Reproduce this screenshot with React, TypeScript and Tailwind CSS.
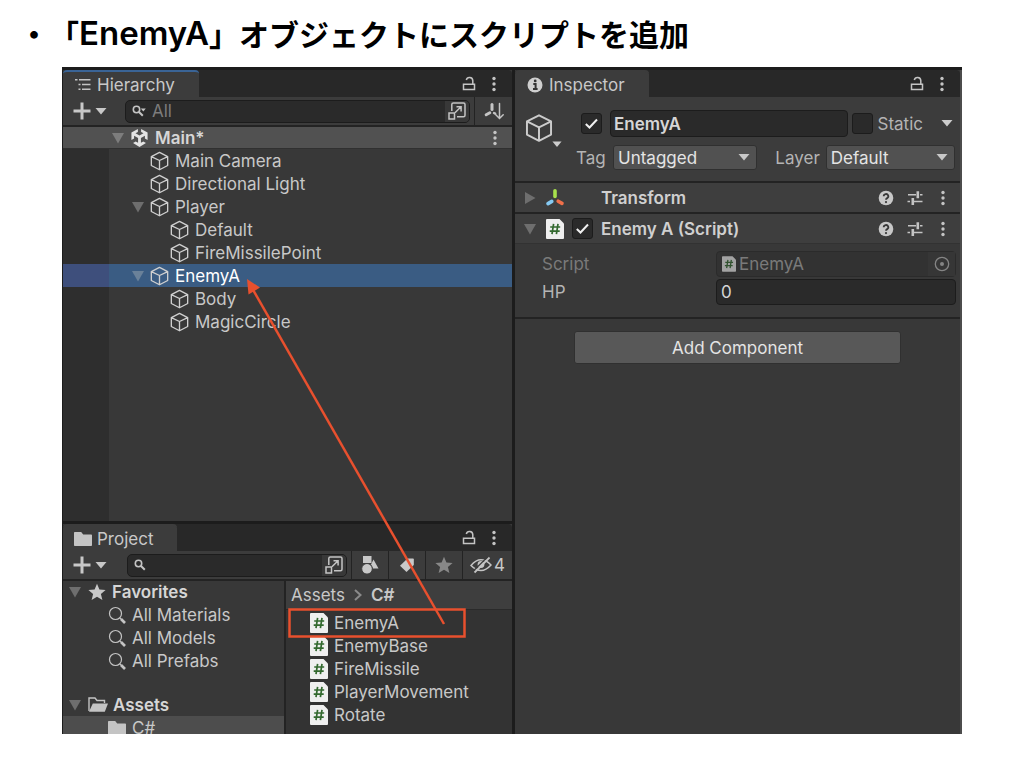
import React from 'react';

type IconProps = { className?: string };

const Triangle = ({ className = '' }: IconProps) => (
  <svg viewBox="0 0 12 12" className={`h-3 w-3 shrink-0 fill-current ${className}`} aria-hidden="true">
    <path d="M0 1h12L6 11.500z" />
  </svg>
);

const Caret = ({ className = '' }: IconProps) => (
  <svg viewBox="0 0 12 7" className={`h-[7px] w-3 shrink-0 fill-current ${className}`} aria-hidden="true">
    <path d="M.5 0h11L6 6.500z" />
  </svg>
);

const Cube = ({ className = '' }: IconProps) => (
  <svg viewBox="0 0 20 20" className={`shrink-0 fill-none stroke-current ${className}`} strokeWidth="1.4" strokeLinejoin="round" aria-hidden="true">
    <path d="M10 .9 18.600 5.300V14.700L10 19.200 1.400 14.700V5.300zM1.400 5.300 10 9.500l8.600-4.200M10 9.500v9.700" />
  </svg>
);

const UnityLogo = () => (
  <svg viewBox="0 0 20 20" className="h-5 w-[19px] shrink-0" aria-hidden="true">
    <path fill="#e4e4e4" d="M8.300.4v3.200L5.800 5l4.200 2.400L14.200 5l-2.500-1.400V.4l6.800 3.900v7.900l-2.800-1.600V7.700l-4.200 2.400v4.900l2.500-1.400 2.800 1.600L10 19.600l-6.800-4.400L6 13.600 8.500 15v-4.900L4.300 7.700v2.900l-2.800 1.600V4.300z" />
  </svg>
);

const Dots = () => (
  <svg viewBox="0 0 4 16" className="h-4 w-1 fill-[#c4c4c4]" aria-hidden="true">
    <circle cx="2" cy="2.500" r="1.700" />
    <circle cx="2" cy="8" r="1.700" />
    <circle cx="2" cy="13.500" r="1.700" />
  </svg>
);

const Lock = () => (
  <svg viewBox="0 0 14 16" className="h-4 w-[14px] fill-none stroke-[#c4c4c4]" strokeWidth="1.500" aria-hidden="true">
    <path d="M1.500 8.300h11v5.200h-11zM10.800 8V4.600a3.300 3.300 0 0 0-6.500-.6" />
  </svg>
);

const Plus = () => (
  <svg viewBox="0 0 18 18" className="h-[18px] w-[18px] stroke-[#c8c8c8]" strokeWidth="3" aria-hidden="true">
    <path d="M9 .5v17M.5 9h17" />
  </svg>
);

const SmallSearch = ({ caret = false }: { caret?: boolean }) => (
  <svg viewBox="0 0 14 12" className="h-3 w-[14px] shrink-0 fill-none stroke-[#c4c4c4]" strokeWidth="1.600" aria-hidden="true">
    <circle cx="4.500" cy="4.500" r="3.200" />
    <path d="m7 7 3.800 3.800" strokeWidth="2" />
    {caret && <path d="M8.800 3.600h5L11.300 6.400z" fill="#c4c4c4" stroke="none" />}
  </svg>
);

const Popout = () => (
  <svg viewBox="0 0 18 18" className="h-[18px] w-[18px] fill-none stroke-[#c4c4c4]" strokeWidth="1.500" aria-hidden="true">
    <path d="M3.800 9V2.500q0-1.500 1.500-1.500h10.200Q17 1 17 2.500v10.700q0 1.500-1.500 1.500H9M1 11h5.500v6H1zM7.200 10.500l5.600-5.500M8.500 4.800h4.600v4.600" />
  </svg>
);

const SortAxis = () => (
  <svg viewBox="0 0 20 18" className="h-[18px] w-5 fill-none stroke-[#c4c4c4]" strokeLinecap="round" aria-hidden="true">
    <path d="M8 2.500v5" strokeWidth="3" />
    <path d="m2.200 12.800 3.600-2" strokeWidth="3" />
    <path d="m10 11 1.200.6" strokeWidth="2.400" />
    <path d="M15.500 1.500V16M11.800 12.800l3.700 3.700 3.700-3.700" strokeWidth="1.500" />
  </svg>
);

const TransformIcon = () => (
  <svg viewBox="0 0 20 20" className="h-5 w-5 shrink-0 fill-none" strokeWidth="3.600" strokeLinecap="round" aria-hidden="true">
    <path d="M10 2.800v5.600" stroke="#a8e04c" />
    <path d="m3 15.600 3.800-2.200" stroke="#85c9f2" />
    <path d="m13.200 13.200 3.800 2.200" stroke="#f0704a" />
  </svg>
);

const ScriptIcon = ({ className = 'h-5 w-[18px]' }: IconProps) => (
  <svg viewBox="0 0 18 20" className={`shrink-0 ${className}`} aria-hidden="true">
    <path d="M1 0h12.500L18 4.500V19q0 1-1 1H1q-1 0-1-1V1q0-1 1-1z" fill="#efefef" />
    <path d="M7.600 4.800 6 15.200M12 4.800l-1.600 10.400M4.200 8h10M3.700 12.200h10" stroke="#33692f" strokeWidth="1.700" fill="none" />
  </svg>
);

const Help = () => (
  <svg viewBox="0 0 16 16" className="h-4 w-4" aria-hidden="true">
    <circle cx="8" cy="8" r="7.300" fill="#c8c8c8" />
    <path d="M5.700 6.300a2.300 2.200 0 1 1 3.500 1.800Q8 8.800 8 9.800" fill="none" stroke="#383838" strokeWidth="1.800" />
    <circle cx="8" cy="12.100" r="1.100" fill="#383838" />
  </svg>
);

const Presets = () => (
  <svg viewBox="0 0 16 16" className="h-4 w-4 fill-none stroke-[#c4c4c4]" strokeWidth="1.500" aria-hidden="true">
    <path d="M1 4.800h8M13 4.800h2.500M.5 11.500h2.500M7 11.500h8.500" />
    <path d="M10.800 1.300v7M5.800 8v7" strokeWidth="2.600" />
  </svg>
);

const InfoIcon = () => (
  <svg viewBox="0 0 16 16" className="h-4 w-4 shrink-0" aria-hidden="true">
    <circle cx="8" cy="8" r="7.500" fill="#cfcfcf" />
    <path d="M6.300 6.900H8.600v4.600M6 12h4.600" stroke="#333" strokeWidth="2" fill="none" />
    <circle cx="8.200" cy="3.900" r="1.400" fill="#333" />
  </svg>
);

const HierarchyIcon = () => (
  <svg viewBox="0 0 16 13" className="h-[13px] w-4 shrink-0 stroke-[#c4c4c4]" strokeWidth="1.600" aria-hidden="true">
    <path d="M0 1.800h2.500M4 1.800H15.500M3.500 6.500h2M7 6.500h8.500M3.500 11.200h2M7 11.200h8.500" />
  </svg>
);

const Folder = ({ className = '' }: IconProps) => (
  <svg viewBox="0 0 18 14" className={`h-[14px] w-[18px] shrink-0 fill-[#c4c4c4] ${className}`} aria-hidden="true">
    <path d="M.8 0h6.400l2 2.500h8q.8 0 .8.800v10q0 .7-.8.700H.8Q0 14 0 13.300V.8Q0 0 .8 0z" />
  </svg>
);

const FolderOpen = () => (
  <svg viewBox="0 0 20 15" className="h-[15px] w-5 shrink-0" aria-hidden="true">
    <path d="M1 14V1h6l2 2.500h7.500V6" fill="none" stroke="#c4c4c4" strokeWidth="1.400" />
    <path d="M4.800 6.500H20L16.800 14.800H1z" fill="#c4c4c4" />
  </svg>
);

const Star = ({ className = '' }: IconProps) => (
  <svg viewBox="0 0 18 18" className={`h-[18px] w-[18px] shrink-0 fill-current ${className}`} aria-hidden="true">
    <path d="m9 .8 2.400 5.700 6.200.5-4.700 4 1.500 6.100L9 13.800l-5.400 3.300L5.100 11 .4 7l6.200-.5z" />
  </svg>
);

const BigSearch = () => (
  <svg viewBox="0 0 18 18" className="h-[18px] w-[18px] shrink-0 fill-none stroke-[#c4c4c4]" aria-hidden="true">
    <circle cx="7.500" cy="7.500" r="6" strokeWidth="1.200" />
    <path d="m11.800 11.800 1.500 1.500" strokeWidth="1.200" />
    <path d="m13 13 4 4" strokeWidth="2.600" />
  </svg>
);

const Shapes = () => (
  <svg viewBox="0 0 18 20" className="h-5 w-[18px] fill-[#c8c8c8]" aria-hidden="true">
    <path d="M2 1h8.500v7H2zM12.500 4.500l5 9h-5.500l-2-4z" />
    <circle cx="6" cy="13.800" r="5.300" stroke="#3c3c3c" strokeWidth="1" />
  </svg>
);

const Tag = () => (
  <svg viewBox="0 0 16 16" className="h-4 w-4 fill-[#c8c8c8]" aria-hidden="true">
    <path d="M8.500 1.500H14q.8 0 .8.800V8L7.500 15 1 8.800z" />
  </svg>
);

const HiddenEye = () => (
  <svg viewBox="0 0 22 18" className="h-[18px] w-[22px] shrink-0 fill-none stroke-[#c4c4c4]" strokeWidth="1.500" aria-hidden="true">
    <path d="M1 9.500Q6 3.800 11 3.800t10 5.200Q16 14.500 11 14.500T1 9.500z" />
    <circle cx="11" cy="8.500" r="3.400" fill="#c4c4c4" stroke="none" />
    <path d="M4.500 16.500 19.500 1.500" strokeWidth="1.800" />
    <path d="M3.300 15 18 .5" stroke="#3c3c3c" strokeWidth="1.200" />
  </svg>
);

function IconButton({ label, className = '', children }: { label: string; className?: string; children: React.ReactNode }) {
  return (
    <button type="button" aria-label={label} className={`flex shrink-0 items-center justify-center ${className}`}>
      {children}
    </button>
  );
}

function TabBar({ icon, title, active = false, tabClass }: { icon: React.ReactNode; title: string; active?: boolean; tabClass: string }) {
  return (
    <div className="flex h-[27px] shrink-0 items-stretch rounded-t bg-[#282828]">
      <button
        type="button"
        className={`flex items-center rounded-t border-t-2 bg-[#3c3c3c] text-[#c8c8c8] ${active ? 'border-[#3a6496]' : 'border-[#3c3c3c]'} ${tabClass}`}
      >
        {icon}
        {title}
      </button>
      <div className="ml-auto flex items-center gap-4 pr-4">
        <IconButton label={`Lock ${title}`}><Lock /></IconButton>
        <IconButton label={`${title} menu`}><Dots /></IconButton>
      </div>
    </div>
  );
}

function Check({ id, label, checked = false }: { id: string; label: string; checked?: boolean }) {
  return (
    <span className="relative flex h-[21px] w-[21px] shrink-0">
      <input
        id={id}
        type="checkbox"
        aria-label={label}
        defaultChecked={checked}
        className="peer h-full w-full appearance-none rounded-[3px] border border-[#1c1c1c] bg-[#2a2a2a]"
      />
      <svg viewBox="0 0 21 21" className="pointer-events-none absolute inset-0 hidden fill-none stroke-[#f0f0f0] peer-checked:block" strokeWidth="2" aria-hidden="true">
        <path d="m4.800 11 3.700 3.500 7.500-8" />
      </svg>
    </span>
  );
}

function Select({ id, value, options, className }: { id: string; value: string; options: string[]; className: string }) {
  return (
    <span className={`relative flex h-[25px] ${className}`}>
      <select
        id={id}
        defaultValue={value}
        className="h-full w-full appearance-none rounded-[3px] border border-[#303030] bg-[#515151] pr-6 pl-1 text-[#e4e4e4]"
      >
        {options.map((o) => <option key={o}>{o}</option>)}
      </select>
      <Caret className="pointer-events-none absolute top-[9px] right-[7px] text-[#c8c8c8]" />
    </span>
  );
}

type Node = { name: string; depth: 1 | 2; open?: boolean; selected?: boolean };

const nodes: Node[] = [
  { name: 'Main Camera', depth: 1 },
  { name: 'Directional Light', depth: 1 },
  { name: 'Player', depth: 1, open: true },
  { name: 'Default', depth: 2 },
  { name: 'FireMissilePoint', depth: 2 },
  { name: 'EnemyA', depth: 1, open: true, selected: true },
  { name: 'Body', depth: 2 },
  { name: 'MagicCircle', depth: 2 },
];

function Hierarchy() {
  return (
    <section className="flex min-h-0 flex-1 flex-col bg-[#383838]">
      <TabBar icon={<HierarchyIcon />} title="Hierarchy" active tabClass="gap-[6px] pr-6 pl-3" />
      <div className="flex h-[30px] shrink-0 items-center border-b-2 border-[#232323] bg-[#3c3c3c]">
        <IconButton label="Create object" className="ml-[10px] gap-1 text-[#c8c8c8]"><Plus /><Caret /></IconButton>
        <div className="ml-[18px] flex h-[23px] flex-1 items-center rounded-[5px] border border-[#1c1c1c] bg-[#2a2a2a] pl-[6px]">
          <SmallSearch caret />
          <input aria-label="Search hierarchy" placeholder="All" className="ml-[6px] w-0 flex-1 bg-transparent placeholder:text-[#7c7c7c]" />
          <IconButton label="Open search window" className="h-full w-6 rounded-r-[4px] bg-[#383838]"><Popout /></IconButton>
        </div>
        <IconButton label="Sort objects" className="ml-[4px] h-full w-[38px] border-l border-[#232323]"><SortAxis /></IconButton>
      </div>
      <div className="flex h-[22px] shrink-0 items-center border-b border-[#303030] bg-[#515151] pr-[15px] pl-[49px]">
        <Triangle className="mr-[6px] text-[#7d7d7d]" />
        <UnityLogo />
        <span className="ml-[6px] font-semibold text-[#d6d6d6]">Main*</span>
        <IconButton label="Scene menu" className="ml-auto"><Dots /></IconButton>
      </div>
      <ul>
        {nodes.map((n) => (
          <li key={n.name} className={`flex h-[23px] ${n.selected ? 'bg-[#3a5c83] text-white' : 'text-[#c8c8c8]'}`}>
            <span className={`w-[46px] ${n.selected ? 'bg-[#3e4f7c]' : 'bg-[#2e2e2e]'}`} />
            <span className={`flex items-center gap-[6px] ${n.depth === 1 ? 'pl-[23px]' : 'pl-[43px]'}`}>
              <Triangle className={n.open ? (n.selected ? 'text-[#6a8199]' : 'text-[#6e6e6e]') : 'invisible'} />
              <Cube className="h-[20px] w-[19px] text-[#d0d0d0]" />
              {n.name}
            </span>
          </li>
        ))}
      </ul>
      <div className="w-[46px] flex-1 bg-[#2e2e2e]" />
    </section>
  );
}

const files = ['EnemyA', 'EnemyBase', 'FireMissile', 'PlayerMovement', 'Rotate'];
const searches = ['All Materials', 'All Models', 'All Prefabs'];

function Project() {
  return (
    <section className="flex h-[210px] shrink-0 flex-col overflow-hidden bg-[#383838]">
      <TabBar icon={<Folder />} title="Project" tabClass="gap-[5px] pr-6 pl-[11px]" />
      <div className="flex h-[30px] shrink-0 items-center border-b-2 border-[#232323] bg-[#3c3c3c] text-[#c8c8c8]">
        <IconButton label="Create asset" className="ml-[10px] gap-1"><Plus /><Caret /></IconButton>
        <div className="ml-5 flex h-[23px] flex-1 items-center rounded-[5px] border border-[#1c1c1c] bg-[#2a2a2a] pl-[6px]">
          <SmallSearch />
          <input aria-label="Search project" className="ml-1 w-0 flex-1 bg-transparent" />
          <IconButton label="Open search window" className="h-full w-6 rounded-r-[4px] bg-[#383838]"><Popout /></IconButton>
        </div>
        <IconButton label="Search by type" className="ml-1 h-full w-[37px] border-l border-[#232323]"><Shapes /></IconButton>
        <IconButton label="Search by label" className="h-full w-[37px] border-l border-[#232323]"><Tag /></IconButton>
        <IconButton label="Save search" className="h-full w-[37px] border-l border-[#232323] text-[#888888]"><Star /></IconButton>
        <button type="button" aria-label="Hidden packages: 4" className="flex h-full w-[50px] items-center justify-center gap-[2px] border-l border-[#232323]">
          <HiddenEye />4
        </button>
      </div>
      <div className="grid min-h-0 flex-1 grid-cols-[223fr_226fr] text-[#c8c8c8]">
        <div className="border-r-2 border-[#232323]">
          <div className="flex h-[22px] items-center pl-[6px] font-semibold text-[#d6d6d6]">
            <Triangle className="text-[#6e6e6e]" />
            <Star className="mr-[6px] ml-[7px] text-[#c8c8c8]" />
            Favorites
          </div>
          <ul>
            {searches.map((s) => (
              <li key={s} className="flex h-[23px] items-center gap-[6px] pl-[45px]"><BigSearch />{s}</li>
            ))}
          </ul>
          <div className="mt-[21px] flex h-[23px] items-center pl-[6px] font-semibold text-[#d6d6d6]">
            <Triangle className="mr-[7px] text-[#6e6e6e]" />
            <FolderOpen />
            <span className="ml-[5px]">Assets</span>
          </div>
          <div className="flex h-[23px] items-center gap-[6px] bg-[#4d4d4d] pl-[45px]"><Folder />C#</div>
        </div>
        <div className="bg-[#333333]">
          <nav aria-label="Folder path" className="flex h-[29px] items-center border-b border-[#2a2a2a] bg-[#3e3e3e] pl-[5px]">
            <a href="#assets">Assets</a>
            <svg viewBox="0 0 8 12" className="mx-[9px] h-3 w-2 fill-none stroke-[#8a8a8a]" strokeWidth="2" aria-hidden="true"><path d="m1 1 5.500 5L1 11" /></svg>
            <a href="#csharp" className="font-semibold">C#</a>
          </nav>
          <ul className="pt-px">
            {files.map((f) => (
              <li key={f} className="flex h-[23px] items-center gap-[6px] pl-6"><ScriptIcon />{f}</li>
            ))}
          </ul>
        </div>
      </div>
    </section>
  );
}

function ComponentTools({ name }: { name: string }) {
  return (
    <div className="ml-auto flex items-center gap-[13px] pr-[10px]">
      <IconButton label={`${name} help`}><Help /></IconButton>
      <IconButton label={`${name} presets`}><Presets /></IconButton>
      <IconButton label={`${name} menu`} className="w-[14px]"><Dots /></IconButton>
    </div>
  );
}

function Inspector() {
  return (
    <section className="flex min-h-0 flex-col border-r-2 border-[#4c4c4c] bg-[#383838] text-[#b4b4b4]">
      <TabBar icon={<InfoIcon />} title="Inspector" tabClass="gap-[6px] pr-6 pl-3" />
      <div className="flex h-[86px] shrink-0 border-b-2 border-[#232323] bg-[#3c3c3c] pt-[13px] pr-[5px] pl-[10px]">
        <button type="button" aria-label="Object icon" className="mt-[2px] flex h-9 w-10 shrink-0 items-end">
          <Cube className="h-8 w-7 self-start text-[#cccccc]" />
          <Caret className="-ml-px h-[6px] w-[10px] text-[#cccccc]" />
        </button>
        <div className="flex min-w-0 flex-1 flex-col gap-2">
          <div className="flex items-center pr-[2px] pl-[16px]">
            <Check id="active" label="Object active" checked />
            <input
              aria-label="Object name"
              defaultValue="EnemyA"
              className="ml-2 h-[27px] w-0 flex-1 rounded-[4px] border border-[#1c1c1c] bg-[#2a2a2a] pl-[3px] font-semibold text-[#d6d6d6]"
            />
            <span className="ml-1 flex"><Check id="static" label="Static" /></span>
            <label htmlFor="static" className="ml-[5px]">Static</label>
            <IconButton label="Static options" className="ml-[18px] text-[#cccccc]"><Caret /></IconButton>
          </div>
          <div className="flex items-center pl-[11px]">
            <label htmlFor="tag" className="w-[37px] shrink-0">Tag</label>
            <Select id="tag" value="Untagged" options={['Untagged', 'Player']} className="min-w-0 flex-[143]" />
            <label htmlFor="layer" className="mr-[6px] ml-[18px]">Layer</label>
            <Select id="layer" value="Default" options={['Default', 'UI']} className="min-w-0 flex-[128]" />
          </div>
        </div>
      </div>
      <div className="flex h-[31px] shrink-0 items-center border-b-2 border-[#232323] bg-[#3e3e3e] pl-[9px] font-semibold text-[#d0d0d0]">
        <Triangle className="-rotate-90 text-[#6e6e6e]" />
        <span className="mr-[36px] ml-[9px]"><TransformIcon /></span>
        Transform
        <ComponentTools name="Transform" />
      </div>
      <div className="flex h-[30px] shrink-0 items-center border-b border-[#323232] bg-[#3e3e3e] pl-[9px] font-semibold text-[#d0d0d0]">
        <Triangle className="text-[#6e6e6e]" />
        <ScriptIcon className="mr-2 ml-[10px] h-5 w-[18px]" />
        <Check id="enabled" label="Script enabled" checked />
        <span className="ml-[8px]">Enemy A (Script)</span>
        <ComponentTools name="Script" />
      </div>
      <div className="grid shrink-0 grid-cols-[174fr_240fr] items-center gap-y-[2px] border-b-2 border-[#232323] pt-[7px] pr-1 pb-3 pl-[27px]">
        <span className="text-[#7a7a7a]">Script</span>
        <div className="flex h-[26px] items-center rounded-[4px] border border-[#2b2b2b] bg-[#323232] pl-[5px] text-[#7a7a7a]">
          <ScriptIcon className="mr-[3px] h-4 w-[14px] opacity-60" />
          EnemyA
          <IconButton label="Select script" className="ml-auto h-full w-[27px] bg-[#363636]">
            <svg viewBox="0 0 16 16" className="h-4 w-4 fill-none stroke-[#858585]" strokeWidth="1.300" aria-hidden="true">
              <circle cx="8" cy="8" r="6.700" />
              <circle cx="8" cy="8" r="2" fill="#858585" stroke="none" />
            </svg>
          </IconButton>
        </div>
        <label htmlFor="hp">HP</label>
        <input id="hp" defaultValue="0" className="h-[26px] w-full rounded-[4px] border border-[#1c1c1c] bg-[#2a2a2a] pl-1 text-[#d6d6d6]" />
      </div>
      <button type="button" className="mx-[59px] mt-3 h-[33px] rounded-[3px] border border-[#303030] bg-[#585858] text-[#e4e4e4]">
        Add Component
      </button>
    </section>
  );
}

export default function App() {
  return (
    <main className="flex h-screen min-h-[700px] flex-col bg-white px-[62px] pb-[34px]">
      <h1 className="-ml-[43px] flex h-[67px] shrink-0 items-center whitespace-nowrap font-['Noto_Sans_CJK_JP',sans-serif] text-[30px] font-bold text-black">
        <span className="w-[30px]">・</span>
        <span>「</span>
        <span className="font-['Inter',sans-serif] text-[33px] font-semibold">EnemyA</span>
        <span>」オブジェクトにスクリプトを追加</span>
      </h1>
      <div className="relative grid min-h-0 flex-1 grid-cols-[449fr_447fr] grid-rows-[minmax(0,1fr)] gap-[3px] bg-[#1c1c1c] pt-[3px] pl-px font-['Inter',sans-serif] text-[17px] leading-[22px]">
        <div className="flex min-h-0 flex-col gap-[3px]">
          <Hierarchy />
          <Project />
        </div>
        <Inspector />
        <svg className="pointer-events-none absolute top-0 left-0 h-[600px] w-[420px] fill-none" viewBox="0 0 420 600" aria-hidden="true">
          <path d="M382 557 190 221" stroke="#e8502e" strokeWidth="2.500" />
          <path d="m185 212 1.500 15.500 11.500-7z" fill="#e8502e" />
          <rect x="227.500" y="542.500" width="175" height="27" stroke="#e8502e" strokeWidth="2.500" />
        </svg>
      </div>
    </main>
  );
}
